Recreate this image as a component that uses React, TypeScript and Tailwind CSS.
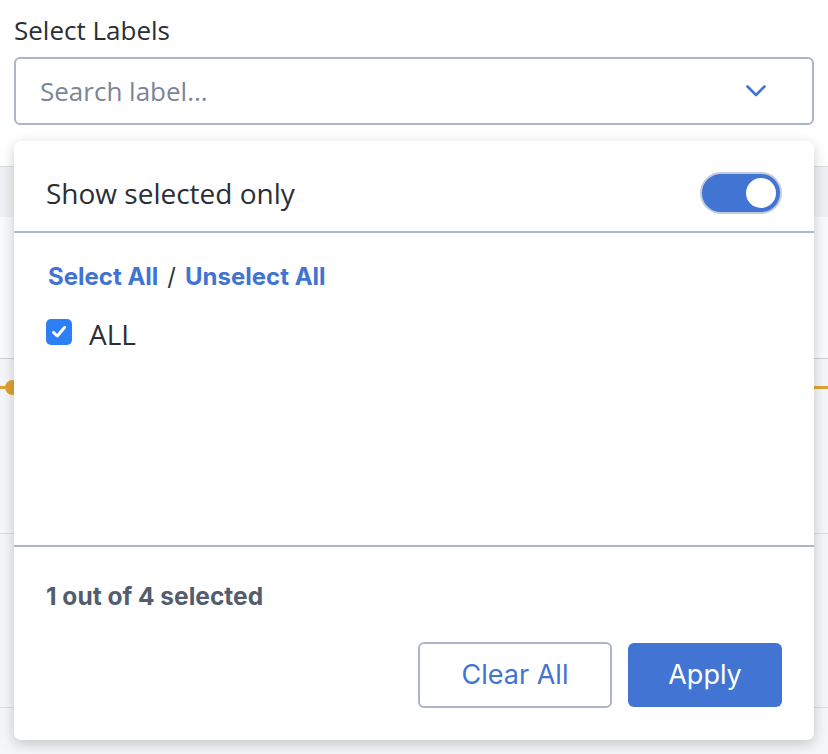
import React from "react";

const openSans = { fontFamily: '"Open Sans", "Liberation Sans", sans-serif' };
const inter = { fontFamily: 'Inter, "Liberation Sans", sans-serif' };

export default function App() {
  return (
    <div className="relative w-[828px] h-[754px] bg-white overflow-hidden">
      {/* Top field */}
      <div className="px-[14px] pt-[12px]">
        <div className="h-[36px] leading-[36px] text-[26px] text-[#2b2f36]" style={openSans}>
          Select Labels
        </div>
        <div className="mt-[9px] h-[68px] border-2 border-[#abb6c8] rounded-[6px] flex items-center pl-[24px] pr-[46px]">
          <div className="flex-1 leading-[64px] text-[26px] text-[#7b8597]" style={openSans}>
            Search label...
          </div>
          <svg width="20" height="14" viewBox="0 0 20 14" fill="none">
            <polyline points="1.5,2.5 10,11 18.5,2.5" stroke="#3f74d3" strokeWidth="2.6" strokeLinecap="round" strokeLinejoin="round" />
          </svg>
        </div>
      </div>

      {/* Page content behind popup */}
      <div className="mt-[41px] border-t border-[#d9dce2]">
        <div className="h-[50px] bg-[#f0f1f4]" />
        <div className="h-[142px] bg-[#f9fafb] border-b border-[#cdd0d6]" />
        <div className="bg-[#f5f6f8] h-[400px] flex flex-col">
          <div className="mt-[27px] relative h-[3px] bg-[#e0a234]">
            <div className="absolute left-[5px] top-[-6px] w-[15px] h-[15px] rounded-full bg-[#e0a234]" />
          </div>
          <div className="mt-[144px] h-px bg-[#dcdee3]" />
          <div className="mt-[173px] h-px bg-[#dcdee3]" />
        </div>
      </div>

      {/* Popup */}
      <div className="absolute left-[14px] top-[141px] w-[800px] h-[599px] bg-white rounded-[7px] shadow-[0_4px_14px_rgba(0,0,0,0.2)] flex flex-col">
        <div className="h-[92px] border-b-2 border-[#abb6c8] px-[32px] pt-[31px]">
          <div className="h-[42px] flex items-start justify-between">
            <span className="text-[28px] leading-[42px] text-[#2b2f36]" style={openSans}>
              Show selected only
            </span>
            <div className="w-[82px] h-[42px] rounded-full bg-[#4174d3] border-2 border-[#c3cadb] flex items-center justify-end pr-[4px]">
              <div className="w-[30px] h-[30px] rounded-full bg-white" />
            </div>
          </div>
        </div>

        <div className="h-[314px] border-b-2 border-[#abb6c8] px-[32px] pt-[30px]">
          <div className="h-[28px] leading-[28px] text-[24px] pl-[2px]" style={inter}>
            <span className="font-bold text-[#3f74d3]">Select All</span>
            <span className="text-[#2d3440] mx-[9px]">/</span>
            <span className="font-bold text-[#3f74d3]">Unselect All</span>
          </div>
          <div className="mt-[28px] flex items-start gap-[17px]">
            <div className="w-[26px] h-[26px] rounded-[5px] bg-[#2d7ff6] flex items-center justify-center">
              <svg width="18" height="18" viewBox="0 0 18 18" fill="none">
                <polyline points="3.5,9.5 7.3,13 14.5,4.5" stroke="white" strokeWidth="3" strokeLinecap="round" strokeLinejoin="round" />
              </svg>
            </div>
            <span className="text-[28px] leading-[31px] text-[#2b2f36]" style={openSans}>
              ALL
            </span>
          </div>
        </div>

        <div className="flex-1 px-[32px] pt-[35px]">
          <div className="h-[29px] leading-[29px] text-[24.5px] font-bold text-[#535d6d]" style={inter}>
            1 out of 4 selected
          </div>
          <div className="mt-[31px] flex justify-end items-center gap-[16px]">
            <button className="w-[194px] h-[66px] border-2 border-[#abb6c8] rounded-[6px] bg-white text-[27px] text-[#3f74d3]" style={inter}>
              Clear All
            </button>
            <button className="w-[154px] h-[64px] rounded-[6px] bg-[#4174d3] text-[27px] text-white" style={inter}>
              Apply
            </button>
          </div>
        </div>
      </div>
    </div>
  );
}
